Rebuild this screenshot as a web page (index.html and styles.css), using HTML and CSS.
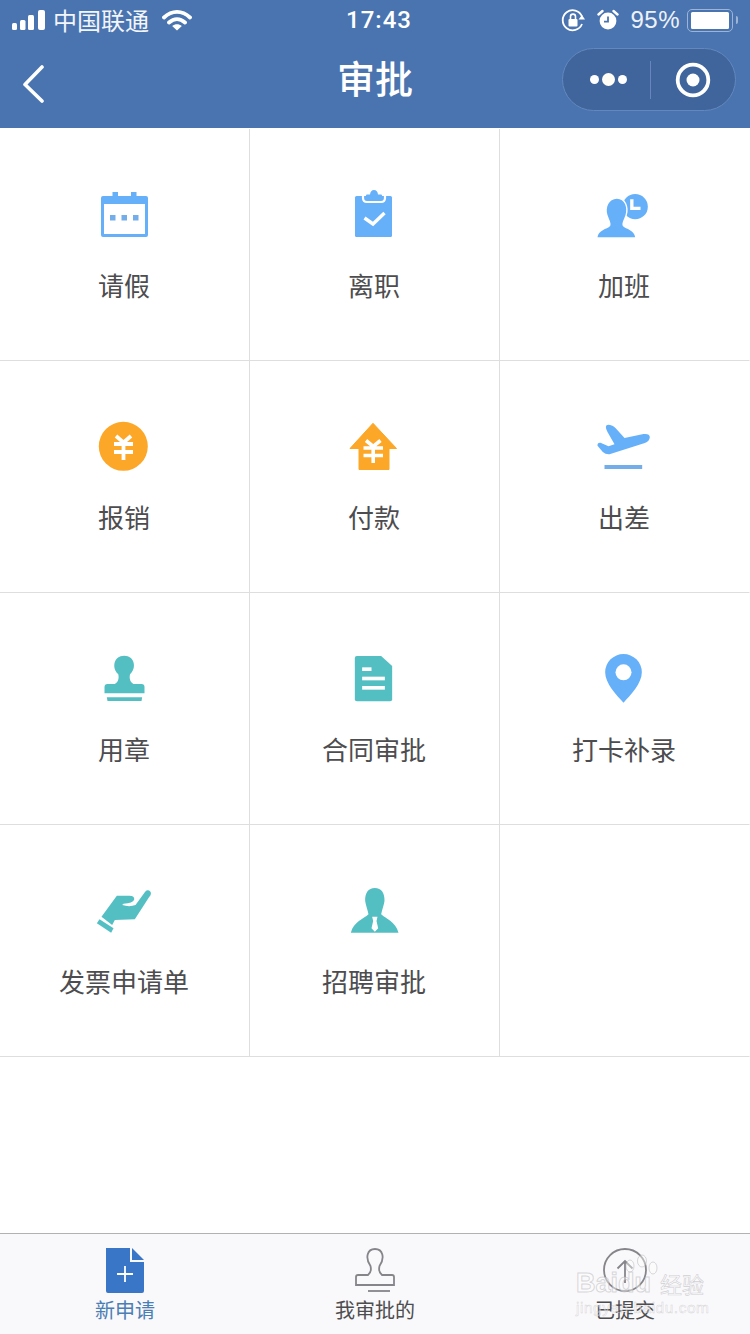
FILE: index.html
```html
<!DOCTYPE html>
<html lang="zh">
<head>
<meta charset="utf-8">
<title>审批</title>
<link rel="stylesheet" href="styles.css">
</head>
<body>
<div class="page">
  <header class="head">
    <div class="status">
      <div class="status-left">
        <svg class="signal" width="33" height="20" viewBox="0 0 33 20"><rect x="0" y="13" width="5" height="7" rx="1.5"/><rect x="8" y="10" width="5.500" height="10" rx="1.5"/><rect x="16" y="5" width="6" height="15" rx="1.5"/><rect x="26" y="0" width="7" height="20" rx="2"/></svg>
        <span class="carrier">中国联通</span>
        <svg class="wifi" width="30" height="22" viewBox="0 0 30 22"><path d="M2 8.500C10 1 20 1 28 8.500M7 13.500C12 9 18 9 23 13.500" fill="none" stroke="#fff" stroke-width="3.800" stroke-linecap="round"/><path d="M15 21.500L10.200 17C13 14.600 17 14.600 19.800 17Z" fill="#fff"/></svg>
      </div>
      <div class="time">17:43</div>
      <div class="status-right">
        <svg width="24" height="24" viewBox="0 0 24 24"><path d="M21 8.500A10 10 0 1 0 21 16" fill="none" stroke="#fff" stroke-width="1.800"/><path d="M17.500 11.500L24 11.500L21 7Z" fill="#fff"/><rect x="7.500" y="11" width="9" height="7.500" rx="1" fill="#fff"/><path d="M9.500 11V8.600a2.500 2.500 0 0 1 5 0V11" fill="none" stroke="#fff" stroke-width="1.600"/></svg>
        <svg class="alarm" width="22" height="22" viewBox="0 0 22 22"><circle cx="11" cy="12" r="8.400" fill="#fff"/><path d="M11 7.500V12.600H7" fill="none" stroke="#4a74b0" stroke-width="1.800"/><path d="M1.500 5.500L5.500 2M20.500 5.500L16.500 2" stroke="#fff" stroke-width="2.400" stroke-linecap="round"/></svg>
        <span class="percent">95%</span>
        <div class="battery"><div class="battery-fill"></div></div>
        <div class="battery-tip"></div>
      </div>
    </div>
    <nav class="nav">
      <div class="nav-left">
        <svg width="26" height="38" viewBox="0 0 26 38"><path d="M21 2L4 19.500L21 36" fill="none" stroke="#fff" stroke-width="3.600" stroke-linecap="round" stroke-linejoin="round"/></svg>
      </div>
      <h1 class="title">审批</h1>
      <div class="nav-right">
        <div class="capsule">
          <div class="capsule-part capsule-more">
            <span class="dot"></span><span class="dot dot-big"></span><span class="dot"></span>
          </div>
          <div class="capsule-line"></div>
          <div class="capsule-part">
            <svg width="36" height="36" viewBox="0 0 36 36"><circle cx="18" cy="18" r="15.300" fill="none" stroke="#fff" stroke-width="3.800"/><circle cx="18" cy="18" r="6.500" fill="#fff"/></svg>
          </div>
        </div>
      </div>
    </nav>
  </header>

  <main class="grid">
    <div class="cell">
      <svg class="icon" viewBox="0 0 60 60"><path d="M9 12h9.500V8h5.500v4h13V8h5.500v4H52q2 0 2 2v37q0 2-2 2H9q-2 0-2-2V14q0-2 2-2Z" fill="#66b0fa"/><rect x="10" y="20" width="41" height="30" fill="#fff"/><rect x="16" y="31" width="5.500" height="5.500" fill="#74aeea"/><rect x="27.500" y="31" width="5.500" height="5.500" fill="#74aeea"/><rect x="39" y="31" width="5.500" height="5.500" fill="#74aeea"/></svg>
      <span class="label">请假</span>
    </div>
    <div class="cell">
      <svg class="icon" viewBox="0 0 60 60"><path d="M12.500 12h34q1.500 0 1.500 1.500v38q0 1.500-1.500 1.500h-34q-1.500 0-1.500-1.500v-38q0-1.500 1.500-1.500Z" fill="#66b0fa"/><path d="M19 9.500V14q0 4 4 4H37q4 0 4-4V9.500" fill="none" stroke="#fff" stroke-width="2.200"/><path d="M22 16V11.500q0-1 1-1h3Q26.500 6 30 6t4 4.500h3q1 0 1 1V16Z" fill="#66b0fa"/><path d="M20.500 34l8.500 6 11.500-11" fill="none" stroke="#fff" stroke-width="3.400"/></svg>
      <span class="label">离职</span>
    </div>
    <div class="cell">
      <svg class="icon" viewBox="73.500 42 180 180"><circle cx="197" cy="110" r="38" fill="#66b0fa"/><path d="M187 88V115H213" fill="none" stroke="#fff" stroke-width="10"/><path class="halo" d="M142 86C166 86 175 112 168 135C163 150 156 160 160 168C170 178 195 180 197 202H84C86 180 112 178 122 168C126 160 119 150 114 135C107 112 118 86 142 86Z" fill="#66b0fa"/></svg>
      <span class="label">加班</span>
    </div>

    <div class="cell">
      <svg class="icon" viewBox="0 0 60 60"><circle cx="29.300" cy="30.300" r="24.500" fill="#fca727"/><path d="M22 20l7.500 6.500L37 20M20 28H39M20 36H39M29.500 27V44" fill="none" stroke="#fff" stroke-width="3.800"/></svg>
      <span class="label">报销</span>
    </div>
    <div class="cell">
      <svg class="icon" viewBox="0 0 60 60"><path d="M29 7.300L52.500 32.500H45V53.500H15V32.500H6Z" fill="#fca727" stroke="#fca727" stroke-linejoin="round"/><path d="M22 24.500l7.200 6 7.300-6M19.500 32H39M19.500 39.500H39M29.200 31V47" fill="none" stroke="#fff" stroke-width="3.600"/></svg>
      <span class="label">付款</span>
    </div>
    <div class="cell">
      <svg class="icon" viewBox="73.500 18 180 180"><path d="M109 50Q110 42 122 45Q131 47 138 54L165 84L222 72Q241 70 241 82Q240 94 226 99L120 133Q108 134 100 126L84 107Q83 97 93 98L117 109L135 103L114 66Q109 58 109 50Z" fill="#66b0fa"/><rect x="105" y="165" width="113" height="12" fill="#74aeea"/></svg>
      <span class="label">出差</span>
    </div>

    <div class="cell">
      <svg class="icon" viewBox="43.500 24 180 180"><path d="M116 102C96 84 102 47 134 47C166 47 172 84 152 102C149 112 150 125 162 132H186Q195 132 195 141V160H75V141Q75 132 84 132H106C118 125 119 112 116 102Z" fill="#54bfc3"/><path d="M82 172H188L186 183H84Z" fill="#54bfc3"/></svg>
      <span class="label">用章</span>
    </div>
    <div class="cell">
      <svg class="icon" viewBox="793.500 24 180 180"><path d="M832 48H905L938 78V178Q938 184 932 184H832Q826 184 826 178V54Q826 48 832 48Z" fill="#54bfc3"/><rect x="848" y="82" width="28" height="11" fill="#fff"/><rect x="848" y="110" width="68" height="11" fill="#fff"/><rect x="848" y="138" width="68" height="11" fill="#fff"/></svg>
      <span class="label">合同审批</span>
    </div>
    <div class="cell">
      <svg class="icon" viewBox="73.500 24 180 180"><path d="M162 188C140 165 107 130 107 97A55 55 0 0 1 217 97C217 130 184 165 162 188Z" fill="#66b0fa"/><circle cx="162" cy="97" r="24" fill="#fff"/></svg>
      <span class="label">打卡补录</span>
    </div>

    <div class="cell">
      <svg class="icon" viewBox="43.500 15 180 180"><path d="M112 62H150Q166 62 164 74Q160 84 132 86L128 90Q150 97 168 90L197 50Q205 42 213 50Q217 57 209 66L166 133L106 135L98 150L66 125Z" fill="#54bfc3"/><path d="M60 133L102 160L95 173L52 145Z" fill="#54bfc3"/></svg>
      <span class="label">发票申请单</span>
    </div>
    <div class="cell">
      <svg class="icon" viewBox="793.500 15 180 180"><path d="M886 39C906 39 916 55 915 78C913 92 908 102 905 118C920 132 948 140 957 173H814C823 140 852 132 867 118C864 102 859 92 857 78C856 55 866 39 886 39Z" fill="#54bfc3"/><path d="M878 125H894L891 138L896 160L886 170L876 160L881 138Z" fill="#fff"/></svg>
      <span class="label">招聘审批</span>
    </div>
    <div class="cell"></div>
  </main>

  <footer class="tabbar">
    <div class="tab tab-active">
      <svg class="tab-icon" width="50" height="50" viewBox="0 0 50 50"><path d="M6 2H30V16H44V45Q44 47 42 47H8Q6 47 6 45Z" fill="#3a76c8"/><path d="M32 2L44 14H32Z" fill="#3a76c8"/><path d="M25 20V36M17 28H33" stroke="#fff" stroke-width="1.800"/></svg>
      <span>新申请</span>
    </div>
    <div class="tab">
      <svg class="tab-icon" width="50" height="50" viewBox="0 0 50 50"><path d="M20.500 20C15 12 17 3 25 3C33 3 35 12 29.500 20C28.500 24 29.500 27 32 29H42Q44 29 44 31V39H6V31Q6 29 8 29H18C20.500 27 21.500 24 20.500 20Z" fill="none" stroke="#85858a" stroke-width="1.800"/><path d="M18 45H40" stroke="#85858a" stroke-width="1.800"/></svg>
      <span>我审批的</span>
    </div>
    <div class="tab">
      <svg class="tab-icon" width="50" height="50" viewBox="0 0 50 50"><circle cx="25" cy="24" r="21" fill="none" stroke="#85858a" stroke-width="1.800"/><path d="M25 37V15M17.500 22.500L25 15L32.500 22.500" fill="none" stroke="#85858a" stroke-width="1.800"/></svg>
      <span>已提交</span>
    </div>
    <div class="watermark">
      <svg class="wm-toes" width="40" height="36" viewBox="0 0 40 36"><g fill="rgba(255,255,255,.4)" stroke="rgba(170,170,175,.45)"><ellipse cx="8" cy="12" rx="4" ry="6"/><ellipse cx="20" cy="7" rx="4.500" ry="6"/><ellipse cx="31" cy="14" rx="4" ry="6"/></g></svg>
      <div class="wm-main"><span class="wm-latin">Baidu</span><span class="wm-cn">经验</span></div>
      <div class="wm-url">jingyan.baidu.com</div>
    </div>
  </footer>
</div>
</body>
</html>
```
FILE: styles.css
```css
* { box-sizing: border-box; }
html, body { margin: 0; padding: 0; background: #fff; }
body { font-family: "Noto Sans CJK SC", "Liberation Sans", sans-serif; }
.page { width: 750px; height: 1334px; display: flex; flex-direction: column; overflow: hidden; }

.head { height: 128px; background: #4a74b0; color: #fff; flex: none; }
.status { height: 40px; display: grid; grid-template-columns: 1fr auto 1fr; align-items: center; padding: 0 12px; }
.status-left { display: flex; align-items: center; }
.signal { fill: #fff; }
.carrier { font-size: 24px; line-height: 40px; margin-left: 8px; color: #f2f5fa; }
.wifi { margin-left: 13px; }
.time { font-family: Roboto, "Liberation Sans", sans-serif; font-size: 24px; font-weight: 500; letter-spacing: 1px; padding-left: 8px; }
.status-right { display: flex; align-items: center; justify-content: flex-end; }
.alarm { margin-left: 12px; }
.percent { font-family: "Liberation Sans", sans-serif; font-size: 24px; letter-spacing: .5px; margin-left: 11px; color: #eef2f8; }
.battery { width: 46px; height: 23px; margin-left: 7px; padding: 2px 3px; border: 1.500px solid #9db4d6; border-radius: 5px; }
.battery-fill { height: 100%; background: #fff; border-radius: 1.500px; }
.battery-tip { width: 2.500px; height: 8px; margin-left: 2.500px; background: #9db4d6; border-radius: 0 2px 2px 0; }

.nav { height: 88px; display: grid; grid-template-columns: 1fr auto 1fr; padding: 0 14px 0 21px; }
.nav-left { display: flex; align-items: center; padding-bottom: 1px; }
.title { margin: 0; font-size: 38px; font-weight: 500; line-height: 74px; transform: translateX(-3.500px); }
.nav-right { display: flex; justify-content: flex-end; padding-top: 8px; }
.capsule { width: 174px; height: 63px; display: flex; align-items: center; background: #3f659c; border: 1px solid #6488bd; border-radius: 32px; }
.capsule-part { flex: 1 1 0; display: flex; align-items: center; justify-content: center; }
.capsule-more { gap: 3px; padding-left: 3px; }
.capsule-line { width: 1px; height: 38px; background: #6488bd; }
.dot { width: 9px; height: 9px; background: #fff; border-radius: 50%; }
.dot-big { width: 13px; height: 13px; background: #fffdf5; }

.grid { flex: none; display: grid; grid-template-columns: repeat(3, 250px); grid-auto-rows: 232px; margin-top: 1px; }
.cell { display: flex; flex-direction: column; align-items: center; padding-top: 55px; padding-right: 1px; border-right: 1px solid #dedede; border-bottom: 1px solid #dedede; }
.cell:nth-child(3n) { border-right-color: transparent; }
.icon { width: 60px; height: 60px; display: block; flex: none; }
.halo { stroke: #fff; stroke-width: 8px; paint-order: stroke; }
.label { margin-top: 23px; font-size: 26px; line-height: 36px; color: #4d4d4f; }

.tabbar { position: relative; margin-top: auto; height: 101px; display: grid; grid-template-columns: repeat(3, 250px); background: #f9f8fa; border-top: 1px solid #b2b2b2; }
.tab { display: flex; flex-direction: column; align-items: center; padding-top: 12px; font-size: 20px; line-height: 28px; color: #4d4d4f; }
.tab-active { color: #4a7eb5; }
.tab-icon { display: block; flex: none; }

.watermark { position: absolute; left: 576px; top: 32px; width: 140px; color: rgba(255,255,255,.45); pointer-events: none; }
.wm-toes { position: absolute; left: 46px; top: -12px; }
.wm-main { display: flex; align-items: center; height: 34px; white-space: nowrap; }
.wm-latin { font-family: "Liberation Sans", sans-serif; font-size: 27px; font-weight: 700; -webkit-text-stroke: 1px rgba(170,170,175,.45); }
.wm-cn { flex: none; margin-left: 9px; font-size: 22px; -webkit-text-stroke: .6px rgba(170,170,175,.55); }
.wm-url { margin-top: -2px; font-family: "Liberation Sans", sans-serif; font-size: 15.500px; letter-spacing: .5px; line-height: 20px; white-space: nowrap; -webkit-text-stroke: .5px rgba(170,170,175,.45); }
```
